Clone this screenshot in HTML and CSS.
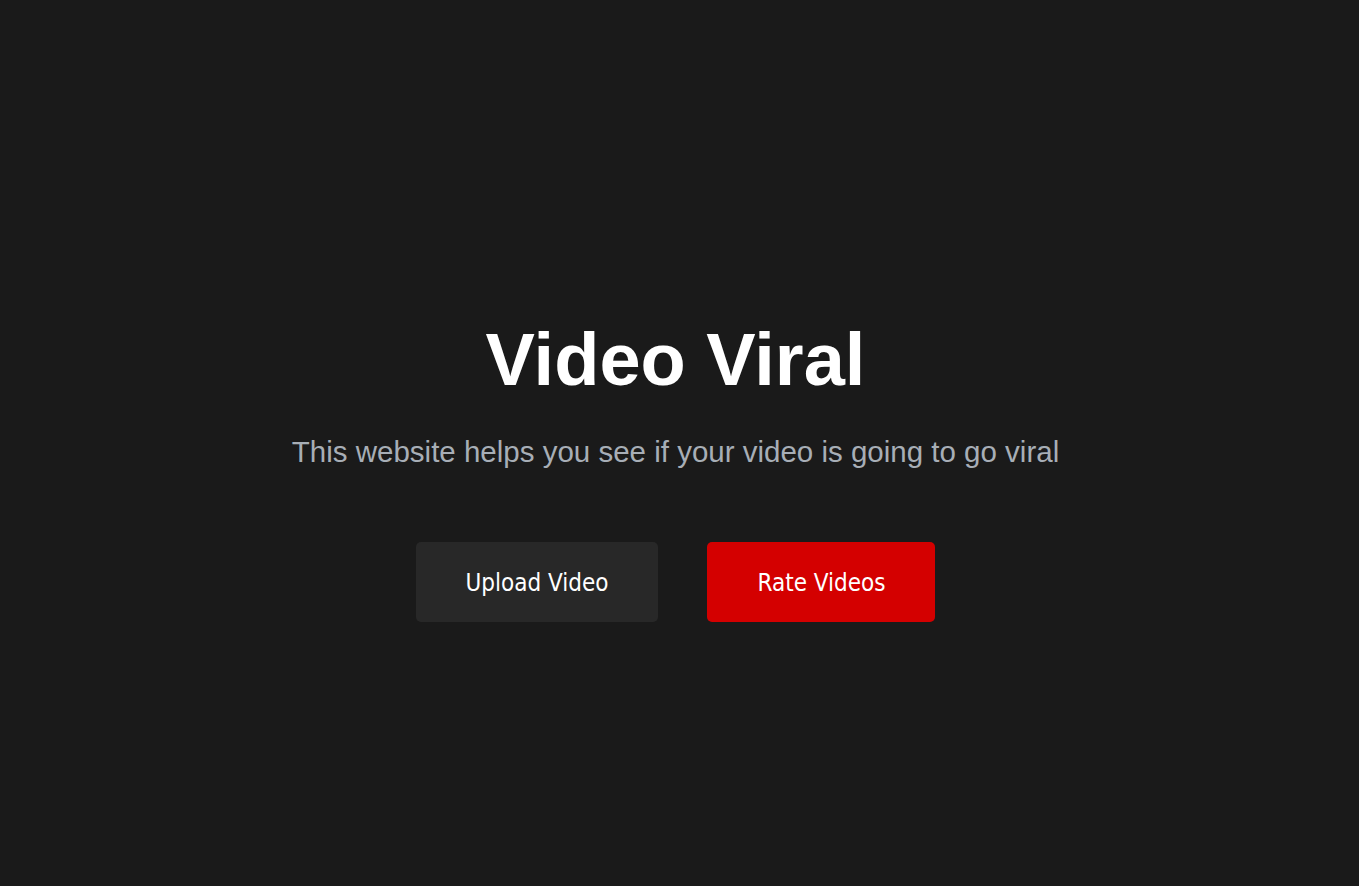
FILE: index.html
```html
<!DOCTYPE html>
<html lang="en">
<head>
<meta charset="utf-8">
<title>Video Viral</title>
<link rel="stylesheet" href="styles.css">
</head>
<body>
<main class="hero">
  <h1 class="title">Video Viral</h1>
  <p class="subtitle">This website helps you see if your video is going to go viral</p>
  <div class="actions">
    <a class="btn btn-dark" href="#">Upload Video</a>
    <a class="btn btn-red" href="#">Rate Videos</a>
  </div>
</main>
</body>
</html>
```

FILE: styles.css
```css
html, body {
  margin: 0;
  padding: 0;
  background: #1a1a1a;
}
body {
  font-family: "Liberation Sans", Arial, sans-serif;
  color: #ffffff;
}
.hero {
  min-height: 886px;
  box-sizing: border-box;
  display: flex;
  flex-direction: column;
  align-items: center;
  justify-content: center;
  padding: 59px 8px 0 0;
}
.title {
  margin: 0;
  font-size: 74px;
  font-weight: 700;
  line-height: 1;
}
.subtitle {
  margin: 40px 0 0;
  font-size: 29.5px;
  line-height: 1;
  color: #a7aeb6;
}
.actions {
  display: flex;
  gap: 49px;
  margin-top: 75.5px;
}
.btn {
  display: block;
  font-family: "DejaVu Sans Condensed", Tahoma, sans-serif;
  font-size: 24px;
  line-height: 24px;
  color: #ffffff;
  text-decoration: none;
  padding: 29px 50px 27px;
  border-radius: 5px;
}
.btn-dark { background: #282828; }
.btn-red { background: #d40000; }
```
